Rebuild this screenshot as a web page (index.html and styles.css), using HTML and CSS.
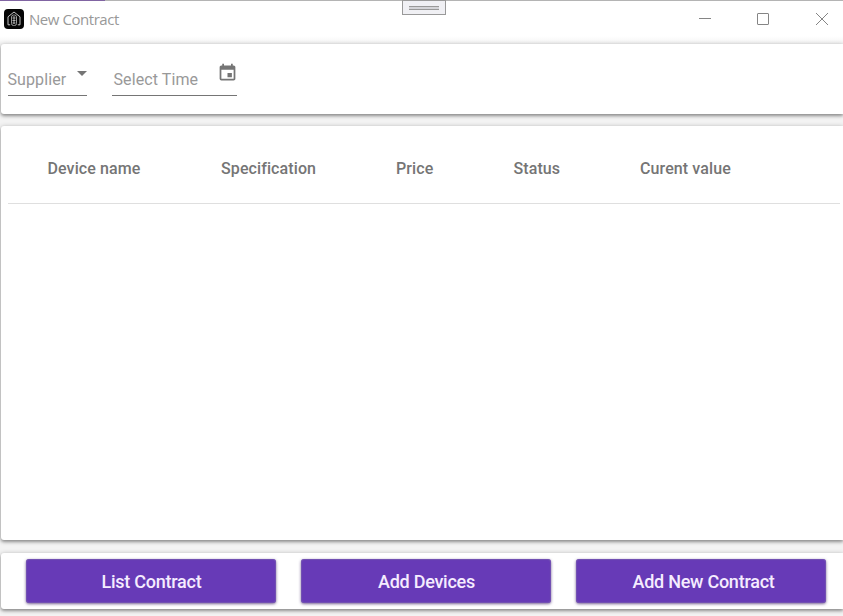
FILE: index.html
```html
<!DOCTYPE html>
<html lang="en">
<head>
<meta charset="utf-8">
<title>New Contract</title>
<link rel="stylesheet" href="styles.css">
</head>
<body>
<div class="window">
  <header class="titlebar">
    <svg class="logo" width="20" height="20" viewBox="0 0 20 20" fill="none">
      <rect width="20" height="20" rx="4" fill="#050505"/>
      <path d="M6.2 15.8H4V7.8L10 3l6 4.800v8h-2.200" stroke="#c4c4c4" stroke-width="1"/>
      <rect x="7.500" y="6" width="5" height="10.500" rx="2" stroke="#999" stroke-width="1"/>
      <path d="M10 7v8M8.500 9h3M8.500 11.500h3M8.500 14h3" stroke="#bbb" stroke-width=".9"/>
    </svg>
    <span class="title">New Contract</span>
    <div class="controls">
      <svg width="14" height="14" viewBox="0 0 14 14"><path d="M2 6.500h12"/></svg>
      <svg width="14" height="14" viewBox="0 0 14 14"><rect x="1.500" y="1.500" width="11" height="11" rx=".5"/></svg>
      <svg width="14" height="14" viewBox="0 0 14 14"><path d="M1 1l12 12M13 1L1 13"/></svg>
    </div>
    <div class="grip"><span></span></div>
  </header>
  <section class="card filters">
    <div class="field supplier">
      <span class="label">Supplier</span>
      <svg class="arrow" width="10" height="5" viewBox="0 0 10 5"><path d="M0 0h10L5 5z" fill="#757575"/></svg>
    </div>
    <div class="field time">
      <span class="label">Select Time</span>
      <svg class="calendar" width="21" height="20" viewBox="0 0 24 24" preserveAspectRatio="none"><path fill="#757575" d="M19 3h-1V1h-2v2H8V1H6v2H5c-1.110 0-2 .9-2 2v14a2 2 0 0 0 2 2h14c1.100 0 2-.9 2-2V5c0-1.100-.9-2-2-2zm0 16H5V8h14zM17 12h-5v5h5z"/></svg>
    </div>
  </section>
  <main class="card devices">
    <div class="columns">
      <span class="device">Device name</span>
      <span class="spec">Specification</span>
      <span class="price">Price</span>
      <span class="status">Status</span>
      <span class="value">Curent value</span>
    </div>
  </main>
  <footer class="card actions">
    <button class="list">List Contract</button>
    <button class="add">Add Devices</button>
    <button class="new">Add New Contract</button>
  </footer>
</div>
</body>
</html>
```
FILE: styles.css
```css
* { box-sizing: border-box; }
body { margin: 0; overflow: hidden; font-family: Roboto, sans-serif; }
.window {
  display: flex;
  flex-direction: column;
  height: 616px;
  background: linear-gradient(#fff 0 36px, #f3f3f3 44px);
}
.titlebar {
  position: relative;
  display: flex;
  align-items: flex-start;
  height: 44px;
  padding: 8px 14px 0 4px;
  border-top: 1px solid #b4b4b4;
}
.titlebar::before {
  content: "";
  position: absolute;
  left: 0;
  top: -1px;
  width: 105px;
  height: 1px;
  background: #8064a2;
}
.title {
  margin-left: 5px;
  font: 15px/20px "Open Sans", sans-serif;
  letter-spacing: -.45px;
  color: #999;
}
.controls {
  display: flex;
  gap: 45px;
  margin-left: auto;
  padding-top: 3px;
}
.controls svg { fill: none; stroke: #858585; stroke-width: 1; }
.grip {
  position: absolute;
  left: 402px;
  top: -1px;
  width: 44px;
  height: 15px;
  border: 1px solid #999;
  background: #f0f0f4;
}
.grip span {
  display: block;
  width: 30px;
  height: 4px;
  margin: 5px 0 0 6px;
  border: solid #999;
  border-width: 1px 0;
  background: #d4d4d8;
}
.card {
  margin-left: 1px;
  border-radius: 3px 0 0 3px;
  background: #fff;
  box-shadow: 0 1px 5px rgba(0, 0, 0, .3), 0 2px 3px rgba(0, 0, 0, .25);
}
.filters {
  display: flex;
  gap: 25px;
  height: 70px;
  margin-bottom: 12px;
  padding: 18px 7px;
}
.field {
  display: flex;
  justify-content: space-between;
  height: 34px;
  border-bottom: 1px solid #757575;
}
.label {
  margin-top: 8px;
  font-size: 16px;
  line-height: 20px;
  letter-spacing: .1px;
  color: #999;
}
.supplier { width: 79px; }
.supplier .label { margin-left: -.5px; }
.time { width: 125px; padding-left: 1.5px; }
.arrow { margin-top: 8.5px; }
.calendar { margin: 1px -1px 0 0; }
.devices { height: 414px; padding: 0 3px 0 7px; margin-bottom: 13px; }
.columns {
  display: flex;
  height: 78px;
  padding: 33px 0 0 39.5px;
  border-bottom: 1px solid #dfdfdf;
  font-size: 16px;
  font-weight: 500;
  line-height: 20px;
  letter-spacing: .1px;
  color: #757575;
}
.device { width: 173.5px; }
.spec { width: 175px; }
.price { width: 117.5px; }
.status { width: 126.5px; }
.actions {
  display: flex;
  gap: 25px;
  height: 56px;
  padding: 6px 17px 6px 25px;
}
.actions button {
  flex: none;
  width: 250px;
  padding: 2px 0 0 1px;
  border: 0;
  border-radius: 3px;
  background: #673ab7;
  box-shadow: 0 1px 3px rgba(60, 30, 100, .7), inset 0 0 1px 1px rgba(130, 110, 175, .5);
  color: #f5ecff;
  font: 500 18px/20px Roboto, sans-serif;
  letter-spacing: -.25px;
}
.actions .new { padding-left: 5px; }
```
